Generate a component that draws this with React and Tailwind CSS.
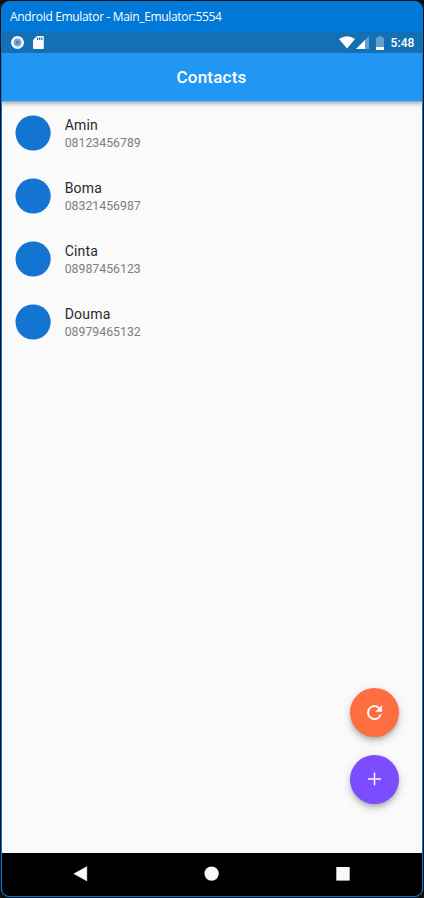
const contacts = [
  { name: 'Amin', phone: '08123456789' },
  { name: 'Boma', phone: '08321456987' },
  { name: 'Cinta', phone: '08987456123' },
  { name: 'Douma', phone: '08979465132' },
];

function TitleBar() {
  return (
    <div className="flex h-[30px] shrink-0 items-center bg-[#0078d7] pl-2 font-['Open_Sans',sans-serif] text-[12px] tracking-[-0.34px] whitespace-nowrap text-white">
      Android Emulator - Main_Emulator:5554
    </div>
  );
}

function StatusBar() {
  return (
    <div className="flex h-[21px] shrink-0 items-center bg-[#1470b5] pr-[7px] pl-[9px] text-white">
      <svg width="13" height="13" viewBox="0 0 13 13">
        <circle cx="6.5" cy="6.5" r="6.5" fill="#fafafa" />
        <circle cx="6.5" cy="6.5" r="3.9" fill="#75a9d4" />
        <circle cx="6.5" cy="6.5" r="1.8" fill="#4389c2" />
      </svg>
      <svg className="ml-[9px]" width="11" height="13" viewBox="0 0 11 13">
        <path d="M4 0H9.8Q10.8 0 10.8 1V12Q10.8 13 9.8 13H1Q0 13 0 12V4Z" fill="#fafafa" />
        <path d="M4 1.5h1.2v2.6H4zM6.1 1.5h1.2v2.6H6.1zM8.2 1.5h1.2v2.6H8.2z" fill="#1470b5" />
      </svg>
      <div className="ml-auto flex items-center">
        <svg width="16" height="13" viewBox="0 0 16 13">
          <path d="M0 3Q8-2.6 16 3L8 12.6Z" fill="#fff" />
        </svg>
        <svg className="ml-px" width="13" height="13" viewBox="0 0 13 13">
          <path d="M0 13L13 0V13Z" fill="#649fcf" />
          <path d="M0 13L9 4V13Z" fill="#fff" />
        </svg>
        <svg className="ml-[7px]" width="8" height="14" viewBox="0 0 8 14">
          <path d="M2.3 0H5.7V1.4H8V14H0V1.4H2.3Z" fill="#649fcf" />
          <path d="M0 11H8V14H0Z" fill="#fff" />
        </svg>
        <span className="ml-[6.5px] w-[24.5px] text-[12px] leading-[14px] font-medium tracking-[0.1px] whitespace-nowrap">5:48</span>
      </div>
    </div>
  );
}

function ContactRow({ name, phone }) {
  return (
    <li className="flex h-[63px] items-center pl-[13px]">
      <svg className="shrink-0" width="37" height="37" viewBox="0 0 37 37">
        <circle cx="18.1" cy="18" r="17.6" fill="#1375d1" />
      </svg>
      <div className="ml-[12.7px]">
        <p className="text-[14px] leading-[18px] tracking-[0.2px] text-[#2b2b2b]">{name}</p>
        <p className="text-[12.3px] leading-[18px] text-[#7e7e7e]">{phone}</p>
      </div>
    </li>
  );
}

const fab = 'flex size-[49px] items-center justify-center rounded-full shadow-[0_3px_4px_-1px_rgba(0,0,0,0.22),0_5px_8px_rgba(0,0,0,0.13),0_1px_12px_rgba(0,0,0,0.06)]';

export default function App() {
  return (
    <div className="h-[898px] w-[424px] bg-[#111] p-px font-[Roboto,sans-serif]">
      <div className="flex h-[896px] w-[422px] flex-col overflow-hidden rounded-[8px] border border-[#0078d7] bg-[#0078d7]">
        <TitleBar />
        <StatusBar />
        <header className="relative flex h-[49px] shrink-0 items-center justify-center border-b border-[#79b3e2] bg-[#2196f3] pt-px pr-px shadow-[0_2px_2px_rgba(0,0,0,0.16),0_4px_4px_rgba(0,0,0,0.09)]">
          <h1 className="text-[17px] font-medium tracking-[0.2px] text-white">Contacts</h1>
        </header>
        <main className="flex min-h-0 flex-1 flex-col bg-[#fafafa]">
          <ul>
            {contacts.map((c) => (
              <ContactRow key={c.name} {...c} />
            ))}
          </ul>
          <div className="mt-auto mr-[23px] mb-[49px] flex flex-col items-end gap-[18px]">
            <button className={`${fab} bg-[#ff6e40]`} aria-label="Refresh">
              <svg width="23" height="23" viewBox="-0.5 -0.6 25 25" fill="#fff" stroke="#fff" strokeWidth="0.2">
                <path d="M17.65 6.35A7.958 7.958 0 0 0 12 4a8 8 0 1 0 7.73 10h-2.08A6 6 0 1 1 12 6c1.66 0 3.14.69 4.22 1.78L13 11h7V4z" />
              </svg>
            </button>
            <button className={`${fab} bg-[#7c4dff]`} aria-label="Add">
              <svg width="23" height="23" viewBox="-0.5 0 25 25" fill="#fff">
                <path d="M19 12.8h-6.2V19h-1.6v-6.2H5v-1.6h6.2V5h1.6v6.2H19z" />
              </svg>
            </button>
          </div>
        </main>
        <nav className="h-[43px] shrink-0 rounded-b-[7px] bg-black">
          <svg width="420" height="43" viewBox="0 0 420 43" fill="#fafafa">
            <path d="M71.8 20.8L84.9 13.6V28Z" stroke="#fafafa" strokeWidth="0.4" strokeLinejoin="round" />
            <circle cx="209.6" cy="20.6" r="7.2" />
            <rect x="334.3" y="14" width="13.4" height="13.6" />
          </svg>
        </nav>
      </div>
    </div>
  );
}
